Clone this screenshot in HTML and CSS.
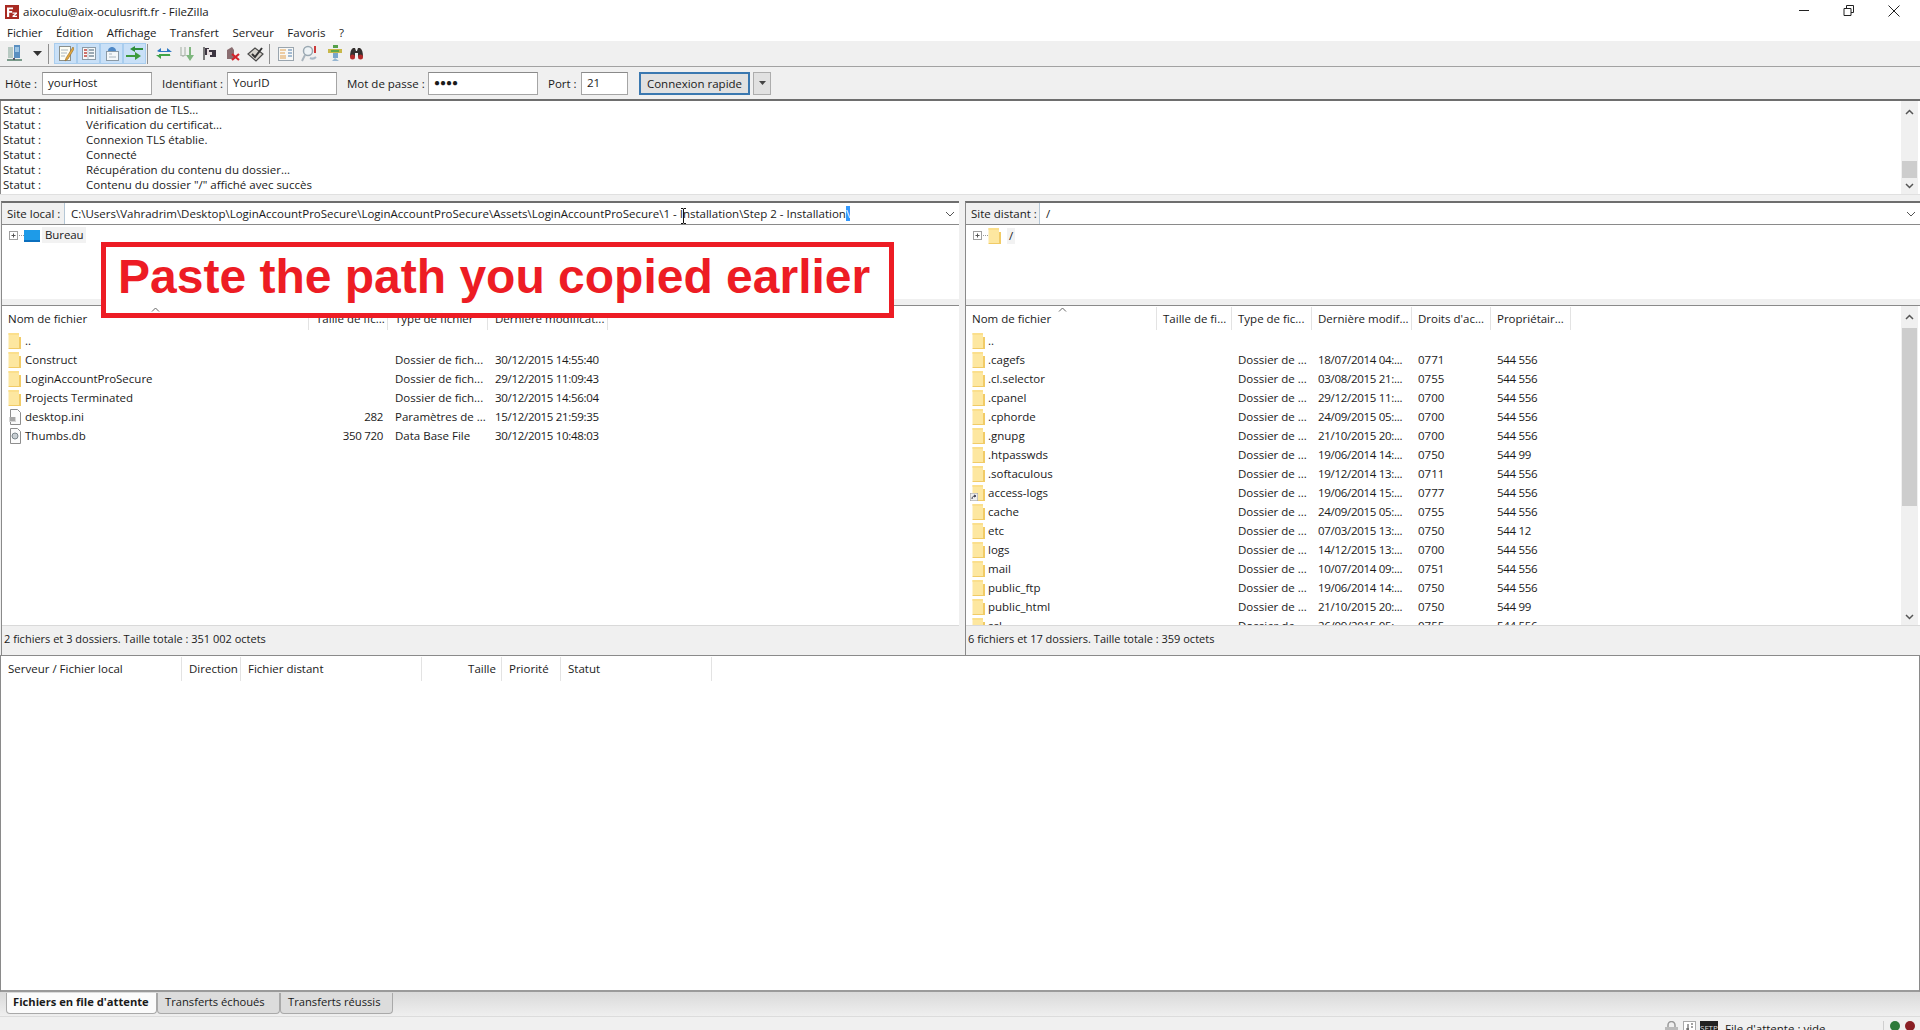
FILE: index.html
```html
<!DOCTYPE html>
<html lang="fr">
<head>
<meta charset="utf-8">
<title>FileZilla</title>
<link rel="stylesheet" href="styles.css">
</head>
<body>
<svg class="defs" width="0" height="0">
  <symbol id="folder" viewBox="0 0 14 18">
    <path d="M0.500 1h10.500v15h-10.500z" fill="#fde7a0"/>
    <path d="M0.500 1h10.500v2h-10.500z" fill="#fbdf8c"/>
    <path d="M11 5h2v12h-12.500v-1h10.500z" fill="#f1cb66"/>
  </symbol>
  <symbol id="expander" viewBox="0 0 24 11">
    <rect x="0.500" y="1.500" width="8" height="8" fill="#fff" stroke="#a0a0a0"/>
    <path d="M2.500 5.500h4M4.500 3.500v4" stroke="#555"/>
    <path d="M10 5.500h1M12 5.500h1M14 5.500h1" stroke="#999"/>
  </symbol>
</svg>
<div class="app">
  <header class="titlebar">
    <svg class="fz-logo" width="14" height="14" viewBox="0 0 14 14"><rect width="14" height="14" fill="#a82a22"/><path d="M2 2.500h6v1.800H4.200v1.700h3v1.800h-3V12H2z" fill="#fff"/><path d="M7.500 7.500h4.500v1.300l-2.500 2h2.500V12H7.500v-1.300l2.500-2H7.500z" fill="#fff"/></svg>
    <span class="title">aixoculu@aix-oculusrift.fr - FileZilla</span>
    <div class="winctl">
      <svg width="12" height="12" viewBox="0 0 12 12"><path d="M1 5.500h10" stroke="#222"/></svg>
      <svg width="12" height="12" viewBox="0 0 12 12"><path d="M3.500 3V.500h7v7H8M1 3.500h7v7H1z" fill="none" stroke="#222"/></svg>
      <svg width="12" height="12" viewBox="0 0 12 12"><path d="M.500.500l11 11M11.500.500l-11 11" stroke="#222"/></svg>
    </div>
  </header>
  <nav class="menubar">
    <span>Fichier</span><span>Édition</span><span>Affichage</span><span>Transfert</span><span>Serveur</span><span>Favoris</span><span>?</span>
  </nav>
  <div class="toolbar">
    <svg class="tool t-site" width="15" height="17" viewBox="0 0 15 17"><rect x="1" y="2" width="5" height="11" fill="#b7c9c2"/><rect x="7" y="0" width="6" height="13" fill="#5a8fc0"/><rect x="8" y="2" width="4" height="5" fill="#9cc4e4"/><path d="M0 15h15" stroke="#7a9a8a" stroke-width="2"/><path d="M7 13v2" stroke="#556" stroke-width="2"/></svg>
    <svg class="tool t-caret" width="9" height="5" viewBox="0 0 9 5"><path d="M0 0h9L4.500 5z" fill="#333"/></svg>
    <i class="tsep"></i>
    <div class="tgroup">
      <b class="tbtn"><svg width="16" height="17" viewBox="0 0 16 17"><rect x="1.500" y="1.500" width="11" height="14" fill="#fdfdf4" stroke="#8a8f8a"/><path d="M3 5h7M3 8h6M3 11h4" stroke="#a9b5be"/><path d="M15 2L8 13l-1 3 3-2 6-10z" fill="#e6a93c" stroke="#92692a" stroke-width=".6"/></svg></b>
      <b class="tbtn"><svg width="16" height="15" viewBox="0 0 16 15"><rect x="1.500" y="1.500" width="13" height="12" fill="#f7f9fa" stroke="#8b9aa6"/><path d="M7 2v11" stroke="#b6c2cb"/><path d="M3 4h3M3 7h3M3 10h3" stroke="#c1453c" stroke-width="1.500"/><path d="M8 4h5M8 7h5M8 10h5" stroke="#7e8e9c" stroke-width="1.500"/></svg></b>
      <b class="tbtn"><svg width="16" height="16" viewBox="0 0 16 16"><path d="M4 5C4 2 6.500 1 8 1s4 1 4 4z" fill="#4f88c6"/><rect x="2.500" y="5.500" width="12" height="9" fill="#f4f7f9" stroke="#8b9aa6"/><path d="M5 8h3M5 11h7" stroke="#a8b4be"/></svg></b>
      <b class="tbtn"><svg width="17" height="15" viewBox="0 0 17 15"><path d="M1 10h9V7l6 4-6 4v-3H1z" transform="translate(-1 -1)" fill="#3c9a3c"/><path d="M16 2H8V0L3 3l5 3V4h8z" fill="#2f8f3b" transform="translate(1 0)"/></svg></b>
    </div>
    <i class="tsep s2"></i>
    <svg class="tool t-refresh" width="16" height="15" viewBox="0 0 16 15"><path d="M3 5h8V2l5 4H1z" fill="#2f78c4"/><path d="M1 5l4-3v3z" fill="#2f78c4"/><path d="M13 10H5v3l-5-4h15z" fill="#41a447"/><path d="M3 8h11v2H3z" fill="#41a447"/></svg>
    <svg class="tool t-queue" width="16" height="16" viewBox="0 0 16 16"><path d="M3 1v9M7 1v9" stroke="#c9cfc9" stroke-width="2"/><path d="M11 1v8H8l4 6 4-6h-3V1z" fill="#7fb77f"/><path d="M5 11l-3-2h6z" fill="#b0b8b0"/></svg>
    <svg class="tool t-flag" width="15" height="15" viewBox="0 0 15 15"><path d="M2 1v13" stroke="#555" stroke-width="1.500"/><path d="M3 2h4v2h7v7H8V9H3z" fill="#3c3540"/><path d="M5 3h2v3h3v3H5z" fill="#e8dfe0"/></svg>
    <svg class="tool t-cancel" width="14" height="15" viewBox="0 0 14 15"><path d="M1 4l5-3 2 3v9H1z" fill="#8a6d70"/><path d="M6 8l7 6M13 8l-7 6" stroke="#d3232a" stroke-width="2.200"/></svg>
    <svg class="tool t-check" width="17" height="16" viewBox="0 0 17 16"><path d="M1 8l7-6 8 6-7 7z" fill="#d6d3cc" stroke="#4a4a4a" stroke-width="1.200"/><path d="M5 8l3 3 7-9" fill="none" stroke="#333" stroke-width="2"/></svg>
    <i class="tsep s3"></i>
    <svg class="tool t-compare" width="16" height="14" viewBox="0 0 16 14"><rect x=".5" y=".5" width="15" height="13" fill="#f8f8f6" stroke="#9aa5ae"/><path d="M2 3h6M2 6h5M2 9h6M2 11h6" stroke="#e0a050"/><path d="M10 3h4M10 6h4M10 9h4" stroke="#88a6c6" stroke-width="1.500"/></svg>
    <svg class="tool t-sync" width="17" height="17" viewBox="0 0 17 17"><circle cx="7" cy="6" r="4.500" fill="#eef3f6" stroke="#9aa8b2" stroke-width="1.500"/><path d="M4 10l-3 6" stroke="#a9b4bd" stroke-width="2"/><path d="M14 1v7" stroke="#cc3a3a" stroke-width="2"/><path d="M9 13c2 1 4 1 6-1" fill="none" stroke="#a9b9c8" stroke-width="2"/></svg>
    <svg class="tool t-filter" width="16" height="17" viewBox="0 0 16 17"><path d="M6 0h5v3H6z" fill="#55a04a"/><path d="M1 4h14v4H1z" fill="#c8b84a"/><path d="M4 5h8v2H4z" fill="#60a84a"/><path d="M6 8h5v5H6z" fill="#7aa6cc"/><path d="M8 13l-3 3h7z" fill="#96b6d2"/></svg>
    <svg class="tool t-find" width="15" height="13" viewBox="0 0 15 13"><path d="M1 10c0-5 1-8 3-9h2l1 3h1l1-3h2c2 1 3 4 3 9H9V6H6v4z" fill="#35302f"/><circle cx="3.500" cy="10" r="2.500" fill="#b42b2b"/><circle cx="11.500" cy="10" r="2.500" fill="#b42b2b"/></svg>
  </div>
  <form class="quickbar">
    <label class="ql-host">Hôte :</label><span class="qinput w110">yourHost</span>
    <label class="ql-user">Identifiant :</label><span class="qinput w110">YourID</span>
    <label class="ql-pass">Mot de passe :</label><span class="qinput w110 dots">●●●●</span>
    <label class="ql-port">Port :</label><span class="qinput w47">21</span>
    <span class="qbtn">Connexion rapide</span>
    <span class="qdrop"><svg width="7" height="4" viewBox="0 0 7 4"><path d="M0 0h7L3.500 4z" fill="#444"/></svg></span>
  </form>
  <section class="log">
    <div class="log-lines">
      <div class="logrow"><span>Statut :</span><span>Initialisation de TLS...</span></div>
      <div class="logrow"><span>Statut :</span><span>Vérification du certificat...</span></div>
      <div class="logrow"><span>Statut :</span><span>Connexion TLS établie.</span></div>
      <div class="logrow"><span>Statut :</span><span>Connecté</span></div>
      <div class="logrow"><span>Statut :</span><span>Récupération du contenu du dossier...</span></div>
      <div class="logrow"><span>Statut :</span><span>Contenu du dossier "/" affiché avec succès</span></div>
    </div>
    <div class="sbar sbar-log">
      <svg width="9" height="6" viewBox="0 0 9 6"><path d="M1 5l3.500-3.500L8 5" fill="none" stroke="#555" stroke-width="1.500"/></svg>
      <i class="thumb thumb-log"></i>
      <svg width="9" height="6" viewBox="0 0 9 6"><path d="M1 1l3.500 3.500L8 1" fill="none" stroke="#555" stroke-width="1.500"/></svg>
    </div>
  </section>
  <main class="panes">
    <section class="pane local">
      <div class="pathbar">
        <span class="pathlabel">Site local :</span>
        <span class="pathval">C:\Users\Vahradrim\Desktop\LoginAccountProSecure\LoginAccountProSecure\Assets\LoginAccountProSecure\1 - Installation\Step 2 - Installation<mark>\</mark></span>
        <svg class="chev" width="10" height="6" viewBox="0 0 10 6"><path d="M1 1l4 4 4-4" fill="none" stroke="#555"/></svg>
      </div>
      <div class="tree">
        <svg class="exp" width="24" height="11"><use href="#expander"/></svg>
        <svg class="desk" width="16" height="12" viewBox="0 0 16 12"><rect width="16" height="12" fill="#1e9be8"/><rect y="10" width="16" height="2" fill="#0b6fbd"/></svg>
        <span class="treelabel">Bureau</span>
      </div>
      <div class="listing">
        <div class="row head">
          <span class="c1">Nom de fichier</span><span>Taille de fic...</span><span>Type de fichier</span><span>Dernière modificat...</span>
          <svg class="sort" width="9" height="5" viewBox="0 0 9 5"><path d="M1 4.500l3.500-3.500L8 4.500" fill="none" stroke="#666"/></svg>
        </div>
        <div class="row"><span class="c1"><svg class="fo" width="14" height="18"><use href="#folder"/></svg>..</span></div>
        <div class="row"><span class="c1"><svg class="fo" width="14" height="18"><use href="#folder"/></svg>Construct</span><span></span><span>Dossier de fich...</span><span>30/12/2015 14:55:40</span></div>
        <div class="row"><span class="c1"><svg class="fo" width="14" height="18"><use href="#folder"/></svg>LoginAccountProSecure</span><span></span><span>Dossier de fich...</span><span>29/12/2015 11:09:43</span></div>
        <div class="row"><span class="c1"><svg class="fo" width="14" height="18"><use href="#folder"/></svg>Projects Terminated</span><span></span><span>Dossier de fich...</span><span>30/12/2015 14:56:04</span></div>
        <div class="row"><span class="c1"><svg class="fo" width="14" height="16" viewBox="0 0 14 16"><path d="M2.500.5h7l3 3v12h-10z" fill="#fbfbfb" stroke="#8d8d8d"/><path d="M1 8h7v5H1z" fill="#d6d6d6"/><path d="M2 9h5M2 11h5" stroke="#777"/></svg>desktop.ini</span><span class="num">282</span><span>Paramètres de ...</span><span>15/12/2015 21:59:35</span></div>
        <div class="row"><span class="c1"><svg class="fo" width="14" height="16" viewBox="0 0 14 16"><path d="M2.500.5h7l3 3v12h-10z" fill="#fbfbfb" stroke="#8d8d8d"/><circle cx="7" cy="8" r="3" fill="#c8ced2" stroke="#7c868c"/></svg>Thumbs.db</span><span class="num">350 720</span><span>Data Base File</span><span>30/12/2015 10:48:03</span></div>
      </div>
      <div class="statusline">2 fichiers et 3 dossiers. Taille totale : 351 002 octets</div>
    </section>
    <section class="pane remote">
      <div class="pathbar">
        <span class="pathlabel">Site distant :</span>
        <span class="pathval">/</span>
        <svg class="chev" width="10" height="6" viewBox="0 0 10 6"><path d="M1 1l4 4 4-4" fill="none" stroke="#555"/></svg>
      </div>
      <div class="tree">
        <svg class="exp" width="24" height="11"><use href="#expander"/></svg>
        <svg class="fo-tree" width="14" height="18"><use href="#folder"/></svg>
        <span class="treelabel">/</span>
      </div>
      <div class="listing">
        <div class="row head">
          <span class="c1">Nom de fichier</span><span>Taille de fi...</span><span>Type de fic...</span><span>Dernière modif...</span><span>Droits d'ac...</span><span>Propriétair...</span>
          <svg class="sort" width="9" height="5" viewBox="0 0 9 5"><path d="M1 4.500l3.500-3.500L8 4.500" fill="none" stroke="#666"/></svg>
        </div>
        <div class="row"><span class="c1"><svg class="fo" width="14" height="18"><use href="#folder"/></svg>..</span></div>
        <div class="row"><span class="c1"><svg class="fo" width="14" height="18"><use href="#folder"/></svg>.cagefs</span><span></span><span>Dossier de ...</span><span>18/07/2014 04:...</span><span>0771</span><span>544 556</span></div>
        <div class="row"><span class="c1"><svg class="fo" width="14" height="18"><use href="#folder"/></svg>.cl.selector</span><span></span><span>Dossier de ...</span><span>03/08/2015 21:...</span><span>0755</span><span>544 556</span></div>
        <div class="row"><span class="c1"><svg class="fo" width="14" height="18"><use href="#folder"/></svg>.cpanel</span><span></span><span>Dossier de ...</span><span>29/12/2015 11:...</span><span>0700</span><span>544 556</span></div>
        <div class="row"><span class="c1"><svg class="fo" width="14" height="18"><use href="#folder"/></svg>.cphorde</span><span></span><span>Dossier de ...</span><span>24/09/2015 05:...</span><span>0700</span><span>544 556</span></div>
        <div class="row"><span class="c1"><svg class="fo" width="14" height="18"><use href="#folder"/></svg>.gnupg</span><span></span><span>Dossier de ...</span><span>21/10/2015 20:...</span><span>0700</span><span>544 556</span></div>
        <div class="row"><span class="c1"><svg class="fo" width="14" height="18"><use href="#folder"/></svg>.htpasswds</span><span></span><span>Dossier de ...</span><span>19/06/2014 14:...</span><span>0750</span><span>544 99</span></div>
        <div class="row"><span class="c1"><svg class="fo" width="14" height="18"><use href="#folder"/></svg>.softaculous</span><span></span><span>Dossier de ...</span><span>19/12/2014 13:...</span><span>0711</span><span>544 556</span></div>
        <div class="row"><span class="c1"><svg class="fo" width="14" height="18"><use href="#folder"/></svg><svg class="link" width="8" height="8" viewBox="0 0 8 8"><rect width="8" height="8" fill="#eee" stroke="#999"/><path d="M2 6c0-2 1-3 3-3M4 2l2 1-2 1" fill="none" stroke="#334"/></svg>access-logs</span><span></span><span>Dossier de ...</span><span>19/06/2014 15:...</span><span>0777</span><span>544 556</span></div>
        <div class="row"><span class="c1"><svg class="fo" width="14" height="18"><use href="#folder"/></svg>cache</span><span></span><span>Dossier de ...</span><span>24/09/2015 05:...</span><span>0755</span><span>544 556</span></div>
        <div class="row"><span class="c1"><svg class="fo" width="14" height="18"><use href="#folder"/></svg>etc</span><span></span><span>Dossier de ...</span><span>07/03/2015 13:...</span><span>0750</span><span>544 12</span></div>
        <div class="row"><span class="c1"><svg class="fo" width="14" height="18"><use href="#folder"/></svg>logs</span><span></span><span>Dossier de ...</span><span>14/12/2015 13:...</span><span>0700</span><span>544 556</span></div>
        <div class="row"><span class="c1"><svg class="fo" width="14" height="18"><use href="#folder"/></svg>mail</span><span></span><span>Dossier de ...</span><span>10/07/2014 09:...</span><span>0751</span><span>544 556</span></div>
        <div class="row"><span class="c1"><svg class="fo" width="14" height="18"><use href="#folder"/></svg>public_ftp</span><span></span><span>Dossier de ...</span><span>19/06/2014 14:...</span><span>0750</span><span>544 556</span></div>
        <div class="row"><span class="c1"><svg class="fo" width="14" height="18"><use href="#folder"/></svg>public_html</span><span></span><span>Dossier de ...</span><span>21/10/2015 20:...</span><span>0750</span><span>544 99</span></div>
        <div class="row"><span class="c1"><svg class="fo" width="14" height="18"><use href="#folder"/></svg>ssl</span><span></span><span>Dossier de ...</span><span>26/09/2015 05:...</span><span>0755</span><span>544 556</span></div>
        <div class="sbar sbar-list">
          <svg width="9" height="6" viewBox="0 0 9 6"><path d="M1 5l3.500-3.500L8 5" fill="none" stroke="#555" stroke-width="1.500"/></svg>
          <i class="thumb thumb-list"></i>
          <svg width="9" height="6" viewBox="0 0 9 6"><path d="M1 1l3.500 3.500L8 1" fill="none" stroke="#555" stroke-width="1.500"/></svg>
        </div>
      </div>
      <div class="statusline">6 fichiers et 17 dossiers. Taille totale : 359 octets</div>
    </section>
    <div class="callout">Paste the path you copied earlier</div>
    <svg class="ibeam" width="7" height="16" viewBox="0 0 7 16"><path d="M1 .5h2l.5.500.5-.500h2M1 15.500h2l.5-.500.5.500h2M3.500 1v14" fill="none" stroke="#111"/></svg>
  </main>
  <section class="queue">
    <div class="qhead"><span>Serveur / Fichier local</span><span>Direction</span><span>Fichier distant</span><span class="num">Taille</span><span>Priorité</span><span>Statut</span></div>
  </section>
  <div class="tabs">
    <span class="tab active">Fichiers en file d'attente</span><span class="tab t2">Transferts échoués</span><span class="tab t3">Transferts réussis</span>
  </div>
  <footer class="statusbar">
    <svg width="15" height="13" viewBox="0 0 15 13"><path d="M4 6V4a3.500 3.500 0 0 1 7 0v2" fill="none" stroke="#999" stroke-width="1.500"/><rect x="1" y="6" width="13" height="7" fill="#bbb"/></svg>
    <svg width="13" height="13" viewBox="0 0 13 13"><rect x=".5" y=".5" width="12" height="12" fill="#fff" stroke="#aaa"/><path d="M3 8h3M5 3v6M8 3h2M8 6h2" stroke="#444"/></svg>
    <span class="srv">SFTP</span>
    <span class="sb-text">File d'attente : vide</span>
    <i class="sb-sep"></i>
    <i class="led green"></i><i class="led red"></i>
  </footer>
</div>
</body>
</html>
```

FILE: styles.css
```css
* { box-sizing: border-box; }
html, body { margin: 0; padding: 0; height: 1030px; overflow: hidden; }
body { font: 11.5px/15px "Open Sans", "Noto Sans", sans-serif; color: #1a1a1a; background: #f0f0f0; }
.defs { position: absolute; }
svg { display: block; flex: none; }
.app { width: 1920px; height: 1030px; display: flex; flex-direction: column; overflow: hidden; }

.titlebar { height: 22px; background: #fff; display: flex; align-items: center; padding-left: 5px; }
.fz-logo { margin-top: 1px; }
.title { margin-left: 4px; }
.winctl { margin-left: auto; display: flex; gap: 33px; padding-right: 20px; }

.menubar { height: 19px; background: #fff; display: flex; padding: 2px 0 0 7px; gap: 13.5px; align-items: center; }

.toolbar { height: 26px; background: #f0f0f0; border-bottom: 1px solid #a2a2a2; display: flex; align-items: center; padding-left: 7px; }
.tsep { width: 1px; height: 20px; background: #8f8f8f; margin-left: 6px; }
.tsep.s2 { margin-left: 1px; }
.tgroup { display: flex; margin-left: 5px; }
.tbtn { width: 23px; height: 21px; background: #c9e0f7; border: 1px solid #a9cdee; display: flex; align-items: center; justify-content: center; font-weight: normal; }
.t-caret { margin-left: 11px; }
.t-refresh { margin-left: 8px; }
.t-queue { margin-left: 6px; }
.t-flag { margin-left: 8px; }
.t-cancel { margin-left: 9px; }
.t-check { margin-left: 7px; }
.s3 { margin-left: 5px; }
.t-compare { margin-left: 8px; }
.t-sync { margin-left: 7px; }
.t-filter { margin-left: 9px; }
.t-find { margin-left: 6px; }

.quickbar { height: 34px; background: #f0f0f0; border-bottom: 2px solid #6e6e6e; display: flex; align-items: center; padding-left: 5px; }
.qinput { height: 23px; background: #fff; border: 1px solid #a5a5a5; border-top-color: #8a8a8a; padding: 1px 5px; line-height: 17px; }
.w110 { width: 110px; }
.w47 { width: 47px; }
.dots { font-size: 10px; }
.ql-host { width: 37px; }
.ql-user { margin-left: 10px; width: 65px; }
.ql-pass { margin-left: 10px; width: 81px; }
.ql-port { margin-left: 10px; width: 33px; }
.qbtn { margin-left: 11px; width: 111px; height: 23px; background: #e1e1e1; border: 2px solid #3a78b0; text-align: center; line-height: 19px; }
.qdrop { margin-left: 3px; width: 18px; height: 23px; background: #e1e1e1; border: 1px solid #adadad; display: flex; align-items: center; justify-content: center; }

.log { height: 94px; background: #fff; display: flex; border-bottom: 1px solid #e0e0e0; }
.log-lines { flex: 1; padding: 1px 0 0 2px; border-left: 1px solid #8a8a8a; }
.logrow { display: grid; grid-template-columns: 83px 1fr; height: 15px; }
.sbar { width: 17px; background: #f0f0f0; display: flex; flex-direction: column; align-items: center; padding: 8px 0 5px; }
.sbar-log { margin-right: 2px; }
.thumb { display: block; width: 15px; background: #cdcdcd; }
.thumb-log { height: 17px; margin-top: auto; margin-bottom: 5px; }
.thumb-list { height: 178px; margin-top: 8px; margin-bottom: auto; }

.panes { position: relative; height: 460px; padding-top: 6px; display: grid; grid-template-columns: 959px 956px; gap: 5px; background: #f0f0f0; }
.pane { display: flex; flex-direction: column; border-top: 2px solid #6e6e6e; border-left: 1px solid #8a8a8a; }
.local { margin-left: 1px; width: 958px; }
.remote { margin-left: 1px; }
.pathbar { height: 22px; background: #fff; border-bottom: 1px solid #8a8a8a; display: flex; align-items: center; }
.pathlabel { height: 21px; background: #f0f0f0; border-right: 1px solid #b5c7d6; padding: 0 0 0 5px; line-height: 21px; flex: none; }
.local .pathlabel { width: 63px; }
.remote .pathlabel { width: 74px; }
.pathval { padding-left: 6px; flex: 1; white-space: nowrap; overflow: hidden; }
.pathval mark { background: #3399ff; color: #fff; }
.chev { margin-right: 4px; }
.tree { height: 74px; background: #fff; display: flex; align-items: flex-start; padding: 3px 0 0 7px; }
.exp { margin-top: 2px; }
.desk { margin-left: -9px; margin-top: 2px; }
.fo-tree { margin-left: -9px; margin-top: -1px; }
.treelabel { background: #f2f2f2; margin-left: 5px; padding: 0 2px; height: 16px; }
.local .treelabel { margin: -1px 0 0 2px; padding: 0 3px; letter-spacing: -0.1px; }

.listing { position: relative; height: 321px; margin-top: 6px; background: #fff; border-top: 1px solid #8a8a8a; overflow: hidden; border-bottom: 1px solid #d9d9d9; }
.row { display: grid; height: 19px; line-height: 19px; white-space: nowrap; }
.local .row { grid-template-columns: 307px 79px 100px 120px; }
.remote .row { grid-template-columns: 191px 75px 80px 100px 79px 80px; }
.row > span { padding-left: 6px; overflow: hidden; }
.local .row > span { padding-left: 7px; }
.row > span:nth-child(4), .row > span:nth-child(6), .row > .num { letter-spacing: -0.3px; }
.row.head > span { letter-spacing: 0; }
.row > .c1, .local .row > .c1 { padding-left: 6px; display: flex; align-items: center; }
.row > .num, .local .row > .num { text-align: right; padding: 0 5px 0 0; }
.fo { margin-right: 2px; }
.local .fo { margin-right: 3px; }
.row.head { height: 25px; line-height: 25px; position: relative; }
.head > span { border-right: 1px solid #e3e3e3; height: 23px; margin-top: 1px; line-height: 23px; }
.sort { position: absolute; top: 1px; left: 149px; z-index: 2; }
.remote .sort { left: 92px; }
.link { margin-left: -18px; margin-right: 10px; margin-top: 8px; }
.sbar-list { position: absolute; right: 2px; top: 0; bottom: 0; }
.statusline { height: 24px; font-size: 11px; line-height: 24px; padding: 1px 0 0 2px; background: #f0f0f0; }

.callout { position: absolute; left: 101px; top: 47px; width: 793px; height: 76px; background: #fff; border: 5px solid #ed1c24; color: #ed1c24; font: bold 48px/59px "Liberation Sans", Arial, sans-serif; padding-left: 12px; white-space: nowrap; }
.ibeam { position: absolute; left: 680px; top: 13px; }

.queue { flex: 1; background: #fff; border-top: 1px solid #8a8a8a; border-left: 1px solid #8a8a8a; border-right: 1px solid #8a8a8a; border-bottom: 2px solid #9a9a9a; padding-top: 1px; }
.qhead { display: grid; grid-template-columns: 181px 59px 181px 80px 59px 151px; height: 24px; line-height: 24px; }
.qhead > span { padding-left: 7px; border-right: 1px solid #e3e3e3; }
.qhead > .num { text-align: right; padding: 0 5px 0 0; }

.tabs { height: 25px; flex: none; display: flex; align-items: flex-start; padding: 1px 0 0 6px; background: linear-gradient(#d9d9d9, #efefef); border-bottom: 1px solid #dcdcdc; font-size: 11.2px; }
.tab { height: 21px; line-height: 18px; border: 1px solid #a9a9a9; border-top: 0; border-radius: 0 0 4px 4px; padding-left: 7px; background: #dcdcdc; white-space: nowrap; }
.tab.active { width: 151px; font-weight: 700; background: #fbfbfb; padding-left: 6px; }
.tab.t2 { width: 123px; }
.tab.t3 { width: 113px; }

.statusbar { height: 13px; flex: none; display: flex; align-items: flex-start; justify-content: flex-end; gap: 4px; padding: 4px 4px 0 0; background: #f0f0f0; overflow: hidden; }
.srv { font-size: 8px; background: #222; color: #ddd; width: 18px; height: 13px; line-height: 13px; overflow: hidden; }
.sb-text { margin-left: 3px; width: 154px; }
.sb-sep { width: 1px; height: 13px; background: #cfcfcf; margin-right: 2px; }
.led { width: 10px; height: 10px; border-radius: 50%; margin-right: 1px; }
.green { background: #2e7a3a; }
.red { background: #8a1f24; }
```
